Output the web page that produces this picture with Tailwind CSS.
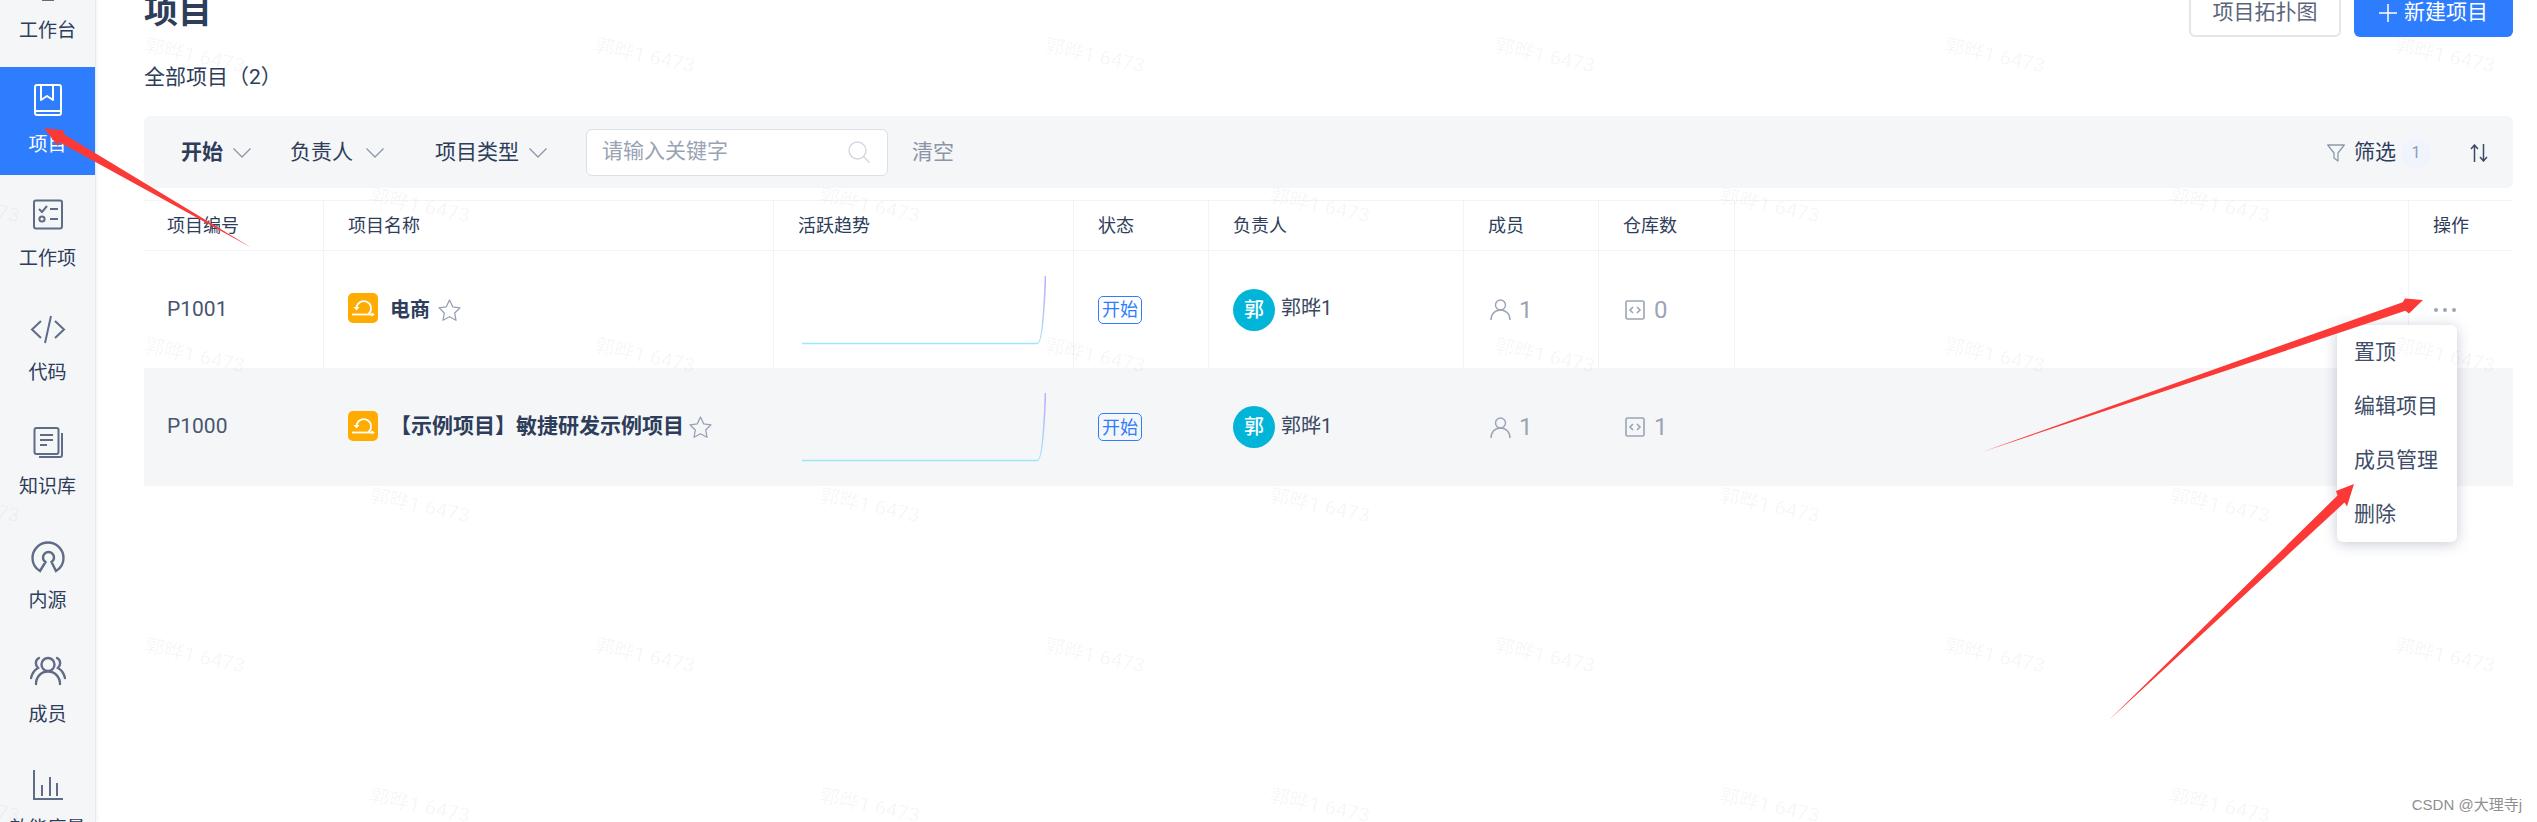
<!DOCTYPE html>
<html lang="zh">
<head>
<meta charset="utf-8">
<title>项目</title>
<script src="https://cdn.jsdelivr.net/npm/@tailwindcss/browser@4"></script>
</head>
<body class="bg-white font-['Roboto','Noto_Sans_CJK_SC',sans-serif] text-[#2d3d5a]">
<div class="relative flex w-[2537px] h-[822px] overflow-hidden">

  <!-- sidebar -->
  <aside class="w-[96px] shrink-0 h-[822px] overflow-hidden bg-[#f5f6f8] border-r border-[#e6e9ee] shadow-[1px_0_3px_rgba(60,80,120,0.08)]">
    <div class="-mt-[47px] flex flex-col gap-[6px] text-[19px] text-[#2d3d5a]">
      <a class="h-[108px] shrink-0 flex flex-col items-center">
        <svg class="mt-[18px] w-[32px] h-[32px] text-[#5f6c86]" viewBox="0 0 32 32" fill="none" stroke="currentColor" stroke-width="2"><rect x="3" y="3" width="26" height="20" rx="2"/><path d="M10 29h12"/></svg>
        <span class="mt-[14px] leading-[28px]">工作台</span>
      </a>
      <a class="h-[108px] shrink-0 flex flex-col items-center bg-[#2e7dff] text-white">
        <svg class="mt-[17px] w-[32px] h-[32px]" viewBox="0 0 32 32" fill="none" stroke="currentColor" stroke-width="2" stroke-linejoin="round"><rect x="3" y="1" width="26" height="30" rx="2"/><path d="M9 1v15l6-4 6 4V1"/><path d="M3 27h26"/></svg>
        <span class="mt-[15px] leading-[28px]">项目</span>
      </a>
      <a class="h-[108px] shrink-0 flex flex-col items-center">
        <svg class="mt-[18px] w-[32px] h-[32px] text-[#5f6c86]" viewBox="0 0 32 32" fill="none" stroke="currentColor" stroke-width="2"><rect x="2" y="1.5" width="28" height="28" rx="2"/><path d="M7 10l3 3 5-6M18 10h8M18 20h8"/><circle cx="10" cy="20" r="2.6"/></svg>
        <span class="mt-[14px] leading-[28px]">工作项</span>
      </a>
      <a class="h-[108px] shrink-0 flex flex-col items-center">
        <svg class="mt-[18px] w-[36px] h-[32px] text-[#5f6c86]" viewBox="0 0 36 32" fill="none" stroke="currentColor" stroke-width="2"><path d="M11 8L2 16.500l9 8.500M25 8l9 8.500-9 8.500M21 3l-6 27"/></svg>
        <span class="mt-[14px] leading-[28px]">代码</span>
      </a>
      <a class="h-[108px] shrink-0 flex flex-col items-center">
        <svg class="mt-[18px] w-[32px] h-[32px] text-[#5f6c86]" viewBox="0 0 32 32" fill="none" stroke="currentColor" stroke-width="2"><rect x="2.500" y="1" width="24" height="26" rx="2"/><path d="M8 8h13M8 13h13M8 18h7"/><path d="M30 6v22a2 2 0 0 1-2 2H7"/></svg>
        <span class="mt-[14px] leading-[28px]">知识库</span>
      </a>
      <a class="h-[108px] shrink-0 flex flex-col items-center">
        <svg class="mt-[18px] w-[34px] h-[32px] text-[#5f6c86]" viewBox="0 0 34 32" fill="none" stroke="currentColor" stroke-width="2.400" stroke-linecap="round"><path d="M9 30C4 27 1.500 22 1.500 17a15.500 15.500 0 0 1 31 0c0 5-2.500 10-7.500 13l-4.500-9c1.500-1 2.500-2.500 2.500-4.500a5.500 5.500 0 0 0-11 0c0 2 1 3.500 2.500 4.500z"/></svg>
        <span class="mt-[14px] leading-[28px]">内源</span>
      </a>
      <a class="h-[108px] shrink-0 flex flex-col items-center">
        <svg class="mt-[18px] w-[36px] h-[32px] text-[#5f6c86]" viewBox="0 0 36 32" fill="none" stroke="currentColor" stroke-width="2.400" stroke-linecap="round"><circle cx="18" cy="9.500" r="6.500"/><path d="M6 29c0-7 5-12.500 12-12.500S30 22 30 29M9 3c-4 2-4 7-1 10-4 2-6 6-7 10M27 3c4 2 4 7 1 10 4 2 6 6 7 10"/></svg>
        <span class="mt-[14px] leading-[28px]">成员</span>
      </a>
      <a class="h-[108px] shrink-0 flex flex-col items-center">
        <svg class="mt-[18px] w-[32px] h-[32px] text-[#5f6c86]" viewBox="0 0 32 32" fill="none" stroke="currentColor" stroke-width="2"><path d="M2 1v29h29M10 16v11M18 8v19M25 14v13"/></svg>
        <span class="mt-[14px] leading-[28px] whitespace-nowrap">效能度量</span>
      </a>
    </div>
  </aside>

  <!-- main -->
  <main class="ml-[48px] w-[2369px] shrink-0">
    <header class="-mt-[11px] h-[48px] flex items-center justify-between">
      <h1 class="-mt-[4px] text-[34px] leading-[44px] font-bold">项目</h1>
      <div class="flex gap-[13px]">
        <button class="w-[152px] h-[48px] rounded-[6px] border-2 border-[#e3e5ea] bg-white text-[21px] text-[#5b667c]">项目拓扑图</button>
        <button class="w-[159px] h-[48px] rounded-[6px] bg-[#2e7dff] text-white text-[21px] flex items-center justify-center gap-[7px]">
          <svg class="w-[18px] h-[18px]" viewBox="0 0 18 18" fill="none" stroke="currentColor" stroke-width="1.500"><path d="M9 0v18M0 9h18"/></svg>
          <span>新建项目</span>
        </button>
      </div>
    </header>
    <p class="mt-[25px] text-[21px] leading-[30px]">全部项目（2）</p>

    <!-- filter bar -->
    <div class="mt-[24px] h-[72px] rounded-[6px] bg-[#f5f6f8] flex items-center pl-[37px] pr-[25px] pt-[1px] text-[21px]">
      <span class="font-bold">开始</span>
      <svg class="ml-[10px] w-[18px] h-[10px] text-[#8c97aa]" viewBox="0 0 18 10" fill="none" stroke="currentColor" stroke-width="1.300"><path d="M0.500 0.500L9 9l8.500-8.500"/></svg>
      <span class="ml-[39px]">负责人</span>
      <svg class="ml-[13px] w-[18px] h-[10px] text-[#8c97aa]" viewBox="0 0 18 10" fill="none" stroke="currentColor" stroke-width="1.300"><path d="M0.500 0.500L9 9l8.500-8.500"/></svg>
      <span class="ml-[51px]">项目类型</span>
      <svg class="ml-[10px] w-[18px] h-[10px] text-[#8c97aa]" viewBox="0 0 18 10" fill="none" stroke="currentColor" stroke-width="1.300"><path d="M0.500 0.500L9 9l8.500-8.500"/></svg>
      <div class="ml-[39px] -mt-[1px] w-[302px] h-[47px] rounded-[6px] border border-[#dcdfe6] bg-white flex items-center justify-between pl-[15px] pr-[17px]">
        <span class="text-[#9aa3b3]">请输入关键字</span>
        <svg class="w-[22px] h-[22px] text-[#d3d7df]" viewBox="0 0 22 22" fill="none" stroke="currentColor" stroke-width="1.400"><circle cx="9.500" cy="9.500" r="8.500"/><path d="M15.500 15.500L21.500 21.500"/></svg>
      </div>
      <span class="ml-[24px] text-[#8b95a7]">清空</span>
      <svg class="ml-auto w-[18px] h-[18px] text-[#8f99ad]" viewBox="0 0 18 18" fill="none" stroke="currentColor" stroke-width="1.300" stroke-linejoin="round"><path d="M0.700 1h16.600L11 9v8l-4-3V9z"/></svg>
      <span class="ml-[9px]">筛选</span>
      <span class="ml-[5px] w-[30px] h-[30px] rounded-full bg-[#eff4fd] text-[#8f9bb3] text-[16px] flex items-center justify-center">1</span>
      <svg class="ml-[39px] w-[18px] h-[18px] text-[#3c4a66]" viewBox="0 0 18 18" fill="none" stroke="currentColor" stroke-width="1.500"><path d="M4.500 18V1M1 5l3.500-4L8 5M13.500 0v17M10 13l3.500 4 3.500-4"/></svg>
    </div>

    <!-- table -->
    <div class="mt-[12px] border-t border-[#f2f3f5] text-[18px]">
      <div class="grid grid-cols-[179px_450px_300px_135px_255px_135px_136px_674px_105px] h-[50px] border-b border-[#f2f3f5] items-stretch">
        <div class="pl-[23px] flex items-center">项目编号</div>
        <div class="pl-[24px] flex items-center border-l border-[#f2f3f5]">项目名称</div>
        <div class="pl-[24px] flex items-center border-l border-[#f2f3f5]">活跃趋势</div>
        <div class="pl-[24px] flex items-center border-l border-[#f2f3f5]">状态</div>
        <div class="pl-[24px] flex items-center border-l border-[#f2f3f5]">负责人</div>
        <div class="pl-[24px] flex items-center border-l border-[#f2f3f5]">成员</div>
        <div class="pl-[24px] flex items-center border-l border-[#f2f3f5]">仓库数</div>
        <div class="border-l border-[#f2f3f5]"></div>
        <div class="pl-[24px] flex items-center border-l border-[#f2f3f5]">操作</div>
      </div>

      <div class="grid grid-cols-[179px_450px_300px_135px_255px_135px_136px_674px_105px] h-[117px]">
        <div class="pl-[23px] flex items-center text-[21px] text-[#47556f]">P1001</div>
        <div class="pl-[24px] flex items-center border-l border-[#f2f3f5]">
          <svg class="w-[30px] h-[30px] -mt-[3px]" viewBox="0 0 30 30"><rect width="30" height="30" rx="5" fill="#ffab00"/><g fill="none" stroke="#fff" stroke-width="1.800"><path d="M4 21.500h21"/><path d="M8.500 14.500a7.300 7.300 0 1 1 12 6.500"/></g><path d="M27 21.500l-3.500-2v4zM8.500 17.500l-3-3.500h6z" fill="#fff"/></svg>
          <span class="ml-[12px] text-[20px] font-bold">电商</span>
          <svg class="ml-[8px] w-[23px] h-[22px] text-[#97a1b5]" viewBox="0 0 23 22" fill="none" stroke="currentColor" stroke-width="1.300" stroke-linejoin="round"><path d="M11.500 1l3.200 6.800 7.300 1-5.300 5.200 1.300 7.300-6.500-3.600-6.500 3.600L6.300 14 1 8.800l7.300-1z"/></svg>
        </div>
        <div class="pl-[28px] pt-[25px] border-l border-[#f2f3f5]">
          <svg class="w-[244px] h-[69px]" viewBox="0 0 244 69" fill="none"><defs><linearGradient id="spark1" gradientUnits="userSpaceOnUse" x1="0" y1="69" x2="0" y2="0"><stop offset="0" stop-color="#9ce8fa"/><stop offset="1" stop-color="#c5a6ff"/></linearGradient></defs><path d="M0 67.500H235.500Q241 67.500 243.500 0" stroke="url(#spark1)" stroke-width="1.600"/></svg>
        </div>
        <div class="pl-[24px] flex items-center border-l border-[#f2f3f5]">
          <span class="w-[44px] h-[28px] rounded-[5px] border border-[#2e7dff] text-[#2e7dff] text-[18px] flex items-center justify-center">开始</span>
        </div>
        <div class="pl-[24px] flex items-center border-l border-[#f2f3f5]">
          <span class="w-[42px] h-[42px] rounded-full bg-[#00b5d8] text-white text-[20px] font-medium flex items-center justify-center">郭</span>
          <span class="ml-[6px] text-[20px] -mt-[3px] text-[#3a4862]">郭晔1</span>
        </div>
        <div class="pl-[26px] flex items-center border-l border-[#f2f3f5] text-[#9aa4b6]">
          <svg class="w-[21px] h-[21px]" viewBox="0 0 21 21" fill="none" stroke="currentColor" stroke-width="1.400"><circle cx="10.500" cy="6" r="5"/><path d="M1 21c0-6 4-10 9.500-10S20 15 20 21"/></svg>
          <span class="ml-[8px] text-[24px]">1</span>
        </div>
        <div class="pl-[26px] flex items-center border-l border-[#f2f3f5] text-[#9aa4b6]">
          <svg class="w-[20px] h-[20px]" viewBox="0 0 20 20" fill="none" stroke="currentColor" stroke-width="1.600"><rect x="1" y="1" width="18" height="18" rx="1.500"/><path d="M8 7l-3 3 3 3M12 7l3 3-3 3"/></svg>
          <span class="ml-[9px] text-[24px]">0</span>
        </div>
        <div class="border-l border-[#f2f3f5]"></div>
        <div class="pl-[25px] flex items-center gap-[5px] border-l border-[#f2f3f5]">
          <span class="w-[4px] h-[4px] rounded-full bg-[#9aa5b8]"></span>
          <span class="w-[4px] h-[4px] rounded-full bg-[#9aa5b8]"></span>
          <span class="w-[4px] h-[4px] rounded-full bg-[#9aa5b8]"></span>
        </div>
      </div>

      <div class="grid grid-cols-[179px_450px_300px_135px_255px_135px_136px_674px_105px] h-[118px] bg-[#f5f6f8]">
        <div class="pl-[23px] flex items-center text-[21px] text-[#47556f]">P1000</div>
        <div class="pl-[25px] flex items-center">
          <svg class="w-[30px] h-[30px] -mt-[3px]" viewBox="0 0 30 30"><rect width="30" height="30" rx="5" fill="#ffab00"/><g fill="none" stroke="#fff" stroke-width="1.800"><path d="M4 21.500h21"/><path d="M8.500 14.500a7.300 7.300 0 1 1 12 6.500"/></g><path d="M27 21.500l-3.500-2v4zM8.500 17.500l-3-3.500h6z" fill="#fff"/></svg>
          <span class="ml-[12px] text-[21px] font-bold">【示例项目】敏捷研发示例项目</span>
          <svg class="ml-[5px] w-[23px] h-[22px] text-[#97a1b5]" viewBox="0 0 23 22" fill="none" stroke="currentColor" stroke-width="1.300" stroke-linejoin="round"><path d="M11.500 1l3.200 6.800 7.300 1-5.300 5.200 1.300 7.300-6.500-3.600-6.500 3.600L6.300 14 1 8.800l7.300-1z"/></svg>
        </div>
        <div class="pl-[29px] pt-[25px]">
          <svg class="w-[244px] h-[69px]" viewBox="0 0 244 69" fill="none"><defs><linearGradient id="spark2" gradientUnits="userSpaceOnUse" x1="0" y1="69" x2="0" y2="0"><stop offset="0" stop-color="#9ce8fa"/><stop offset="1" stop-color="#c5a6ff"/></linearGradient></defs><path d="M0 67.500H235.500Q241 67.500 243.500 0" stroke="url(#spark2)" stroke-width="1.600"/></svg>
        </div>
        <div class="pl-[25px] flex items-center">
          <span class="w-[44px] h-[28px] rounded-[5px] border border-[#2e7dff] text-[#2e7dff] text-[18px] flex items-center justify-center">开始</span>
        </div>
        <div class="pl-[25px] flex items-center">
          <span class="w-[42px] h-[42px] rounded-full bg-[#00b5d8] text-white text-[20px] font-medium flex items-center justify-center">郭</span>
          <span class="ml-[6px] text-[20px] -mt-[3px] text-[#3a4862]">郭晔1</span>
        </div>
        <div class="pl-[27px] flex items-center text-[#9aa4b6]">
          <svg class="w-[21px] h-[21px]" viewBox="0 0 21 21" fill="none" stroke="currentColor" stroke-width="1.400"><circle cx="10.500" cy="6" r="5"/><path d="M1 21c0-6 4-10 9.500-10S20 15 20 21"/></svg>
          <span class="ml-[8px] text-[24px]">1</span>
        </div>
        <div class="pl-[27px] flex items-center text-[#9aa4b6]">
          <svg class="w-[20px] h-[20px]" viewBox="0 0 20 20" fill="none" stroke="currentColor" stroke-width="1.600"><rect x="1" y="1" width="18" height="18" rx="1.500"/><path d="M8 7l-3 3 3 3M12 7l3 3-3 3"/></svg>
          <span class="ml-[9px] text-[24px]">1</span>
        </div>
        <div></div>
        <div></div>
      </div>
    </div>
  </main>

  <!-- dropdown menu -->
  <ul class="absolute left-[2337px] top-[325px] w-[120px] h-[217px] py-[1px] rounded-[6px] bg-white shadow-[0_2px_14px_rgba(50,65,100,0.28)] text-[21px] text-[#3f4d69]">
    <li class="h-[54px] pl-[17px] flex items-center">置顶</li>
    <li class="h-[54px] pl-[17px] flex items-center">编辑项目</li>
    <li class="h-[54px] pl-[17px] flex items-center">成员管理</li>
    <li class="h-[54px] pl-[17px] flex items-center">删除</li>
  </ul>

  <!-- watermark layer -->
  <div class="absolute inset-0 overflow-hidden pointer-events-none text-[20px] font-medium text-black/[0.035] whitespace-nowrap">
    <div class="h-[150px] mt-[30px] flex ml-[148px]">
      <span class="w-[450px] shrink-0"><span class="inline-block origin-top-left rotate-[12deg]">郭晔1 6473</span></span><span class="w-[450px] shrink-0"><span class="inline-block origin-top-left rotate-[12deg]">郭晔1 6473</span></span><span class="w-[450px] shrink-0"><span class="inline-block origin-top-left rotate-[12deg]">郭晔1 6473</span></span><span class="w-[450px] shrink-0"><span class="inline-block origin-top-left rotate-[12deg]">郭晔1 6473</span></span><span class="w-[450px] shrink-0"><span class="inline-block origin-top-left rotate-[12deg]">郭晔1 6473</span></span><span class="w-[450px] shrink-0"><span class="inline-block origin-top-left rotate-[12deg]">郭晔1 6473</span></span>
    </div>
    <div class="h-[150px] flex ml-[-77px]">
      <span class="w-[450px] shrink-0"><span class="inline-block origin-top-left rotate-[12deg]">郭晔1 6473</span></span><span class="w-[450px] shrink-0"><span class="inline-block origin-top-left rotate-[12deg]">郭晔1 6473</span></span><span class="w-[450px] shrink-0"><span class="inline-block origin-top-left rotate-[12deg]">郭晔1 6473</span></span><span class="w-[450px] shrink-0"><span class="inline-block origin-top-left rotate-[12deg]">郭晔1 6473</span></span><span class="w-[450px] shrink-0"><span class="inline-block origin-top-left rotate-[12deg]">郭晔1 6473</span></span><span class="w-[450px] shrink-0"><span class="inline-block origin-top-left rotate-[12deg]">郭晔1 6473</span></span>
    </div>
    <div class="h-[150px] flex ml-[148px]">
      <span class="w-[450px] shrink-0"><span class="inline-block origin-top-left rotate-[12deg]">郭晔1 6473</span></span><span class="w-[450px] shrink-0"><span class="inline-block origin-top-left rotate-[12deg]">郭晔1 6473</span></span><span class="w-[450px] shrink-0"><span class="inline-block origin-top-left rotate-[12deg]">郭晔1 6473</span></span><span class="w-[450px] shrink-0"><span class="inline-block origin-top-left rotate-[12deg]">郭晔1 6473</span></span><span class="w-[450px] shrink-0"><span class="inline-block origin-top-left rotate-[12deg]">郭晔1 6473</span></span><span class="w-[450px] shrink-0"><span class="inline-block origin-top-left rotate-[12deg]">郭晔1 6473</span></span>
    </div>
    <div class="h-[150px] flex ml-[-77px]">
      <span class="w-[450px] shrink-0"><span class="inline-block origin-top-left rotate-[12deg]">郭晔1 6473</span></span><span class="w-[450px] shrink-0"><span class="inline-block origin-top-left rotate-[12deg]">郭晔1 6473</span></span><span class="w-[450px] shrink-0"><span class="inline-block origin-top-left rotate-[12deg]">郭晔1 6473</span></span><span class="w-[450px] shrink-0"><span class="inline-block origin-top-left rotate-[12deg]">郭晔1 6473</span></span><span class="w-[450px] shrink-0"><span class="inline-block origin-top-left rotate-[12deg]">郭晔1 6473</span></span><span class="w-[450px] shrink-0"><span class="inline-block origin-top-left rotate-[12deg]">郭晔1 6473</span></span>
    </div>
    <div class="h-[150px] flex ml-[148px]">
      <span class="w-[450px] shrink-0"><span class="inline-block origin-top-left rotate-[12deg]">郭晔1 6473</span></span><span class="w-[450px] shrink-0"><span class="inline-block origin-top-left rotate-[12deg]">郭晔1 6473</span></span><span class="w-[450px] shrink-0"><span class="inline-block origin-top-left rotate-[12deg]">郭晔1 6473</span></span><span class="w-[450px] shrink-0"><span class="inline-block origin-top-left rotate-[12deg]">郭晔1 6473</span></span><span class="w-[450px] shrink-0"><span class="inline-block origin-top-left rotate-[12deg]">郭晔1 6473</span></span><span class="w-[450px] shrink-0"><span class="inline-block origin-top-left rotate-[12deg]">郭晔1 6473</span></span>
    </div>
    <div class="h-[150px] flex ml-[-77px]">
      <span class="w-[450px] shrink-0"><span class="inline-block origin-top-left rotate-[12deg]">郭晔1 6473</span></span><span class="w-[450px] shrink-0"><span class="inline-block origin-top-left rotate-[12deg]">郭晔1 6473</span></span><span class="w-[450px] shrink-0"><span class="inline-block origin-top-left rotate-[12deg]">郭晔1 6473</span></span><span class="w-[450px] shrink-0"><span class="inline-block origin-top-left rotate-[12deg]">郭晔1 6473</span></span><span class="w-[450px] shrink-0"><span class="inline-block origin-top-left rotate-[12deg]">郭晔1 6473</span></span><span class="w-[450px] shrink-0"><span class="inline-block origin-top-left rotate-[12deg]">郭晔1 6473</span></span>
    </div>
  </div>

  <!-- annotation arrows -->
  <svg class="absolute left-0 top-0 w-[2537px] h-[822px] pointer-events-none" viewBox="0 0 2537 822" fill="#fb3a37">
    <path d="M44 128L64 130.500 63.600 134 252 248 59 142 58 146.500z"/>
    <path d="M2423 300L2405 298.500 2402.700 302.200 1982 452 2405.300 310.800 2409 313.500z"/>
    <path d="M2354 484L2336 491 2337.500 495.500 2108 721 2344.500 502.500 2347 506.500z"/>
  </svg>

  <span class="absolute right-[15px] top-[794px] text-[15px] leading-[22px] text-[#8f8f8f] font-['Liberation_Sans','Noto_Sans_CJK_SC',sans-serif]">CSDN @大理寺j</span>
</div>
</body>
</html>
